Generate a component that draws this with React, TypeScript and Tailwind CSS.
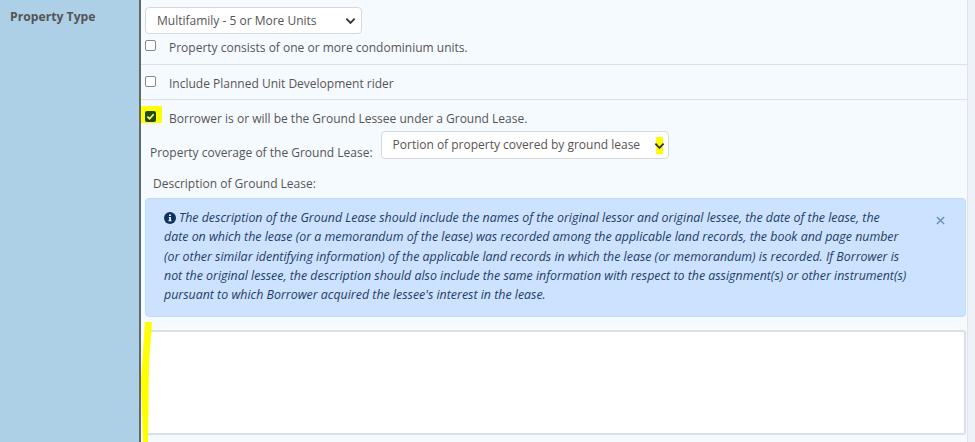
const font = { fontFamily: '"Open Sans", "Noto Sans", sans-serif' };

function Chevron({ className }: { className: string }) {
  return (
    <svg viewBox="0 0 12 8" className={className} fill="none" stroke="#333" strokeWidth="2">
      <path d="M1.500 1.500 6 6l4.500-4.500" />
    </svg>
  );
}

function Box() {
  return <span className="block h-[11px] w-[11px] rounded-[2px] border border-[#888] bg-white" />;
}

function CheckRow({ children, checked }: { children: string; checked?: boolean }) {
  return (
    <div className="flex items-start">
      <div className="relative mr-[13px] mt-[1px] w-[11px]">
        {checked && <span className="absolute left-[-4px] top-[-5px] h-[17px] w-[21px] bg-[#ffff00]" />}
        {checked ? (
          <span className="relative flex h-[11px] w-[11px] items-center justify-center rounded-[2px] bg-[#1f4a12]">
            <svg viewBox="0 0 10 10" className="h-[9px] w-[9px]" fill="none" stroke="#ffff66" strokeWidth="2">
              <path d="M1.500 5.200 4 7.500 8.500 2.500" />
            </svg>
          </span>
        ) : (
          <Box />
        )}
      </div>
      <span className="mt-[1px] text-[12px] leading-[16px] text-[#555]">{children}</span>
    </div>
  );
}

export default function App() {
  return (
    <div className="flex h-[442px] w-[975px] overflow-hidden bg-[#eef2f8]" style={font}>
      <div className="w-[139px] shrink-0 bg-[#aed0e6] pl-[10px] pt-[8px]">
        <h3 className="text-[12.200px] font-bold leading-[18px] text-[#555]">Property Type</h3>
      </div>
      <div className="relative w-[829px] shrink-0 border-l-2 border-r border-l-[#5f6b66] border-r-[#dfe4ea] bg-[#f5faff]">
        <div className="border-b border-[#dde1e6] pb-[8px] pl-[4px] pt-[7px]">
          <div className="mb-[5px] flex h-[27px] w-[217px] items-center justify-between rounded-[4px] border border-[#d5d9de] bg-white pl-[11px] pr-[5px] text-[12px] text-[#555]">
            Multifamily - 5 or More Units
            <Chevron className="h-[8px] w-[11px]" />
          </div>
          <CheckRow>Property consists of one or more condominium units.</CheckRow>
        </div>
        <div className="border-b border-[#dde1e6] pb-[7px] pl-[4px] pt-[10px]">
          <CheckRow>Include Planned Unit Development rider</CheckRow>
        </div>
        <div className="pl-[4px] pt-[10px]">
          <CheckRow checked>Borrower is or will be the Ground Lessee under a Ground Lease.</CheckRow>
          <div className="ml-[5px] mt-[4px] flex items-start text-[12px] text-[#555]">
            <span className="mt-[14px] leading-[16px]">Property coverage of the Ground Lease:</span>
            <div className="ml-[8px] flex h-[28px] w-[288px] items-center justify-between rounded-[4px] border border-[#d5d9de] bg-white pl-[11px] pr-[5px]">
              Portion of property covered by ground lease
              <span className="relative flex h-[17px] w-[7px] items-center justify-center bg-[#ffff00]">
                <Chevron className="absolute left-[-2px] top-[5px] h-[8px] w-[11px]" />
              </span>
            </div>
          </div>
          <p className="ml-[8px] mt-[15px] text-[12px] leading-[16px] text-[#555]">Description of Ground Lease:</p>
        </div>
        <div className="relative ml-[4px] mt-[6px] h-[119px] w-[821px] rounded-[4px] border border-[#bcdcf8] bg-[#cce2fe] pl-[18px] pt-[9px]">
          <p className="whitespace-nowrap text-[12.400px] italic leading-[19.300px] text-[#1f3d66]">
            <svg viewBox="0 0 12 12" className="mr-[3px] inline-block h-[12px] w-[12px] align-[-2px]">
              <circle cx="6" cy="6" r="6" fill="#0f3263" />
              <path d="M5.100 2.500h1.800v1.500H5.100zM4.800 5h2.100v3.200h.600v1H4.500v-1h.700V6h-.400z" fill="#fff" />
            </svg>
            The description of the Ground Lease should include the names of the original lessor and original lessee, the date of the lease, the
            <br />
            date on which the lease (or a memorandum of the lease) was recorded among the applicable land records, the book and page number
            <br />
            (or other similar identifying information) of the applicable land records in which the lease (or memorandum) is recorded. If Borrower is
            <br />
            not the original lessee, the description should also include the same information with respect to the assignment(s) or other instrument(s)
            <br />
            pursuant to which Borrower acquired the lessee's interest in the lease.
          </p>
          <svg viewBox="0 0 10 10" className="absolute right-[20px] top-[17px] h-[9px] w-[9px]" fill="none" stroke="#6d8db5" strokeWidth="1.500">
            <path d="M1 1l8 8M9 1l-8 8" />
          </svg>
        </div>
        <div className="ml-[4px] mt-[13px] h-[105px] w-[821px] rounded-[3px] border-2 border-[#dcdfe4] bg-white" />
        <svg viewBox="0 0 12 120" className="absolute left-[0px] top-[322px] h-[120px] w-[12px]">
          <path d="M4 0h7L8 40 7 120H2L0 60z" fill="#ffff00" />
        </svg>
      </div>
    </div>
  );
}
